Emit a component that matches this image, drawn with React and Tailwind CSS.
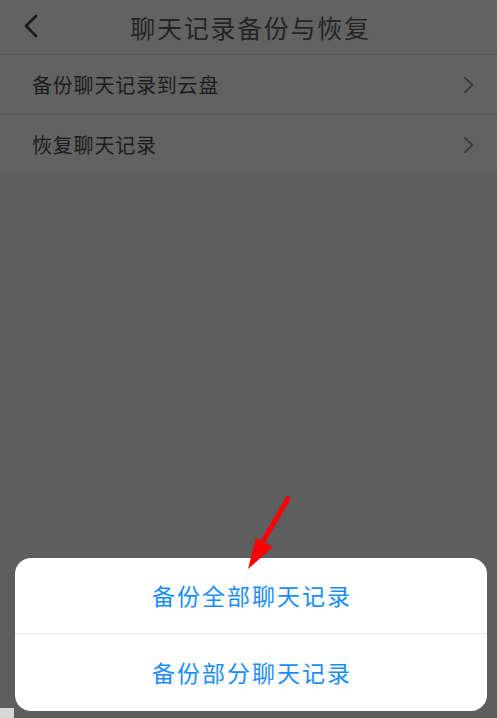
import React from "react";

const cjk = { fontFamily: '"Noto Sans CJK SC", "Noto Sans", sans-serif' };

function Chevron() {
  return (
    <svg width="12" height="18" viewBox="0 0 12 18" fill="none">
      <path d="M2 2 L9.5 9 L2 16" stroke="#3a3c44" strokeWidth="2" strokeLinecap="round" strokeLinejoin="round" />
    </svg>
  );
}

export default function App() {
  return (
    <div className="relative w-[497px] h-[718px] overflow-hidden bg-[#5e5e5e]" style={cjk}>
      <div className="bg-[#626262]">
        <div className="relative h-[55px] flex items-center justify-center border-b border-[#5a5a5a]">
          <svg className="absolute left-[23px] top-[14px]" width="16" height="24" viewBox="0 0 16 24" fill="none">
            <path d="M13 2 L3 12 L13 22" stroke="#1a1a1a" strokeWidth="2.6" strokeLinecap="round" strokeLinejoin="round" />
          </svg>
          <span className="text-[25px] tracking-[1.7px] text-[#242424] leading-none pl-[4px]">聊天记录备份与恢复</span>
        </div>
        <div className="h-[60px] flex items-center justify-between pl-[32px] pr-[22px] border-b border-[#5a5a5a]">
          <span className="text-[20px] tracking-[0.8px] text-[#1c1c1c]">备份聊天记录到云盘</span>
          <Chevron />
        </div>
        <div className="h-[60px] flex items-center justify-between pl-[32px] pr-[22px]">
          <span className="text-[20px] tracking-[0.8px] text-[#1c1c1c]">恢复聊天记录</span>
          <Chevron />
        </div>
      </div>

      <div className="absolute left-[15px] top-[558px] w-[472px] h-[153px] bg-white rounded-[16px] flex flex-col">
        <div className="h-[76px] flex items-center justify-center border-b border-[#e6e6e6]">
          <span className="text-[23px] tracking-[2px] text-[#1a8cff] pl-[2px]">备份全部聊天记录</span>
        </div>
        <div className="flex-1 flex items-center justify-center">
          <span className="text-[23px] tracking-[2px] text-[#1a8cff] pl-[2px]">备份部分聊天记录</span>
        </div>
      </div>

      <svg className="absolute left-0 top-0" width="497" height="718" viewBox="0 0 497 718">
        <line x1="289" y1="497" x2="262" y2="543" stroke="#ff0000" strokeWidth="5" strokeLinecap="butt" />
        <polygon points="248,569 256,538 273,547" fill="#ff0000" />
      </svg>

      <div className="absolute left-0 top-[708px] w-[14px] h-[10px] bg-[#d8d8d8]" />
    </div>
  );
}
